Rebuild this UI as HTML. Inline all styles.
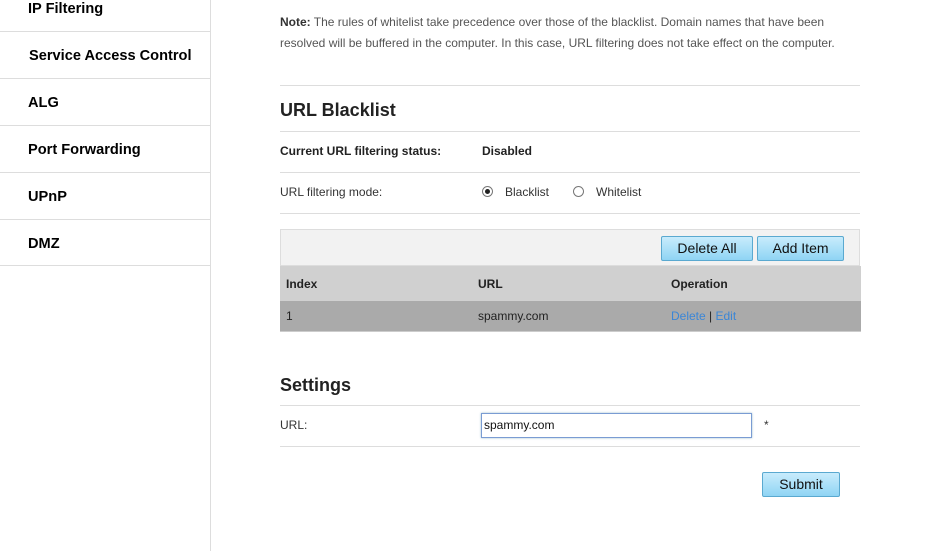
<!DOCTYPE html><html><head><style>
body{margin:0;width:929px;height:551px;background:#fff;font-family:"Liberation Sans",Arial,sans-serif;position:relative;overflow:hidden;color:#333}
.a{position:absolute}
.nav{left:0;width:210px;border-bottom:1px solid #ddd;font-weight:bold;font-size:14.6px;color:#000}
.vl{left:210px;top:0;width:1px;height:551px;background:#ddd}
.hl{left:280px;width:580px;height:1px;background:#ddd}
.s{font-size:12px}
.btn{background:linear-gradient(#c8ecfc,#8fd4f4);border:1px solid #5aa9d0;border-radius:2px;font-size:14px;color:#111;text-align:center;box-sizing:border-box}
.radio{width:11px;height:11px;border:1px solid #777;border-radius:50%;box-sizing:border-box;background:#fff}
</style></head><body>
<div class="a vl"></div>
<div class="a nav" style="top:0;height:31px"><span class="a" style="left:28px;top:1px">IP Filtering</span></div>
<div class="a nav" style="top:31px;height:47px"><span class="a" style="left:29px;top:17px">Service Access Control</span></div>
<div class="a nav" style="top:78px;height:47px"><span class="a" style="left:28px;top:17px">ALG</span></div>
<div class="a nav" style="top:125px;height:47px"><span class="a" style="left:28px;top:17px">Port Forwarding</span></div>
<div class="a nav" style="top:172px;height:47px"><span class="a" style="left:28px;top:17px">UPnP</span></div>
<div class="a nav" style="top:219px;height:46px"><span class="a" style="left:28px;top:17px">DMZ</span></div>

<div class="a s" style="left:280px;top:12px;width:580px;line-height:21px;color:#555"><b style="color:#333">Note:</b> The rules of whitelist take precedence over those of the blacklist. Domain names that have been resolved will be buffered in the computer. In this case, URL filtering does not take effect on the computer.</div>
<div class="a hl" style="top:85px"></div>
<div class="a" style="left:280px;top:100px;font-size:18px;font-weight:bold;color:#222">URL Blacklist</div>
<div class="a hl" style="top:131px"></div>
<div class="a s" style="left:280px;top:144px;font-weight:bold;color:#222">Current URL filtering status:</div>
<div class="a s" style="left:482px;top:144px;font-weight:bold;color:#222">Disabled</div>
<div class="a hl" style="top:172px"></div>
<div class="a s" style="left:280px;top:185px">URL filtering mode:</div>
<div class="a radio" style="left:482px;top:186px"><div class="a" style="left:2px;top:2px;width:5px;height:5px;border-radius:50%;background:#222"></div></div>
<div class="a s" style="left:505px;top:185px">Blacklist</div>
<div class="a radio" style="left:573px;top:186px"></div>
<div class="a s" style="left:596px;top:185px">Whitelist</div>
<div class="a hl" style="top:213px"></div>

<div class="a" style="left:280px;top:229px;width:580px;height:37px;background:#f2f2f2;border:1px solid #ddd;box-sizing:border-box"></div>
<div class="a btn" style="left:661px;top:236px;width:92px;height:25px;line-height:23px">Delete All</div>
<div class="a btn" style="left:757px;top:236px;width:87px;height:25px;line-height:23px">Add Item</div>
<div class="a" style="left:280px;top:266px;width:581px;height:35px;background:#d0d0d0"></div>
<div class="a s" style="left:286px;top:277px;font-weight:bold;color:#222">Index</div>
<div class="a s" style="left:478px;top:277px;font-weight:bold;color:#222">URL</div>
<div class="a s" style="left:671px;top:277px;font-weight:bold;color:#222">Operation</div>
<div class="a" style="left:280px;top:301px;width:581px;height:30px;background:#aaaaaa;border-bottom:1px solid #ccc"></div>
<div class="a s" style="left:286px;top:309px;color:#222">1</div>
<div class="a s" style="left:478px;top:309px;color:#222">spammy.com</div>
<div class="a s" style="left:671px;top:309px;color:#3b86d6">Delete <span style="color:#222">|</span> Edit</div>

<div class="a" style="left:280px;top:375px;font-size:18px;font-weight:bold;color:#222">Settings</div>
<div class="a hl" style="top:405px"></div>
<div class="a s" style="left:280px;top:418px">URL:</div>
<div class="a" style="left:481px;top:413px;width:271px;height:25px;border:1px solid #7a9cd3;box-sizing:border-box;box-shadow:0 0 2px #9bc;font-size:12px;line-height:23px;padding-left:2px;color:#111">spammy.com</div>
<div class="a s" style="left:764px;top:418px">*</div>
<div class="a hl" style="top:446px"></div>
<div class="a btn" style="left:762px;top:472px;width:78px;height:25px;line-height:22px">Submit</div>
</body></html>
